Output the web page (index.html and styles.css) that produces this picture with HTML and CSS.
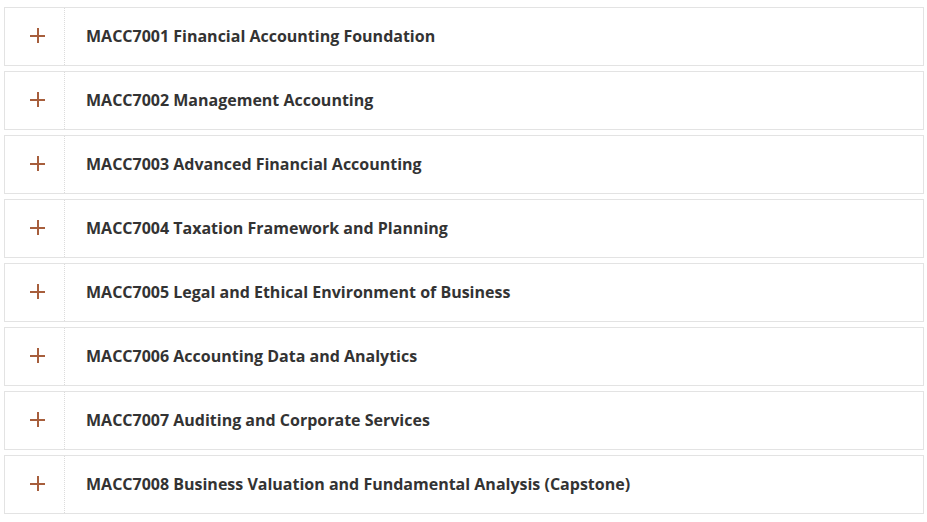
FILE: index.html
```html
<!DOCTYPE html>
<html lang="en">
<head>
    <meta charset="UTF-8">
    <meta name="viewport" content="width=device-width, initial-scale=1.0">
    <title>MACC Courses</title>
    <link rel="stylesheet" href="styles.css">
</head>
<body>
    <div class="accordion">
        <div class="acc-item">
            <div class="acc-toggle"><span class="plus"></span></div>
            <div class="acc-title">MACC7001 Financial Accounting Foundation</div>
        </div>
        <div class="acc-item">
            <div class="acc-toggle"><span class="plus"></span></div>
            <div class="acc-title">MACC7002 Management Accounting</div>
        </div>
        <div class="acc-item">
            <div class="acc-toggle"><span class="plus"></span></div>
            <div class="acc-title">MACC7003 Advanced Financial Accounting</div>
        </div>
        <div class="acc-item">
            <div class="acc-toggle"><span class="plus"></span></div>
            <div class="acc-title">MACC7004 Taxation Framework and Planning</div>
        </div>
        <div class="acc-item">
            <div class="acc-toggle"><span class="plus"></span></div>
            <div class="acc-title">MACC7005 Legal and Ethical Environment of Business</div>
        </div>
        <div class="acc-item">
            <div class="acc-toggle"><span class="plus"></span></div>
            <div class="acc-title">MACC7006 Accounting Data and Analytics</div>
        </div>
        <div class="acc-item">
            <div class="acc-toggle"><span class="plus"></span></div>
            <div class="acc-title">MACC7007 Auditing and Corporate Services</div>
        </div>
        <div class="acc-item">
            <div class="acc-toggle"><span class="plus"></span></div>
            <div class="acc-title">MACC7008 Business Valuation and Fundamental Analysis (Capstone)</div>
        </div>
    </div>
</body>
</html>
```

FILE: styles.css
```css
body {
    font-family: 'Open Sans', 'Liberation Sans', sans-serif;
    margin: 0;
    padding: 7px 3px 0 4px;
    color: #333333;
    background-color: #ffffff;
}
.accordion {
    display: flex;
    flex-direction: column;
    gap: 5px;
}
.acc-item {
    display: flex;
    height: 57px;
    border: 1px solid #e3e3e3;
    background-color: #ffffff;
}
.acc-toggle {
    width: 60px;
    flex-shrink: 0;
    display: flex;
    align-items: center;
    justify-content: center;
    padding: 0 0 2px 5px;
    box-sizing: border-box;
    border-right: 1px dotted #dcdcdc;
}
.plus {
    position: relative;
    display: block;
    width: 15px;
    height: 15px;
}
.plus:before,
.plus:after {
    content: "";
    position: absolute;
    background-color: #a75e3c;
}
.plus:before {
    left: 0;
    right: 0;
    top: 7px;
    height: 2px;
}
.plus:after {
    top: 0;
    bottom: 0;
    left: 7px;
    width: 2px;
}
.acc-title {
    display: flex;
    align-items: center;
    padding: 0 0 2px 21px;
    font-size: 16px;
    font-weight: 700;
    color: #333333;
}
```
